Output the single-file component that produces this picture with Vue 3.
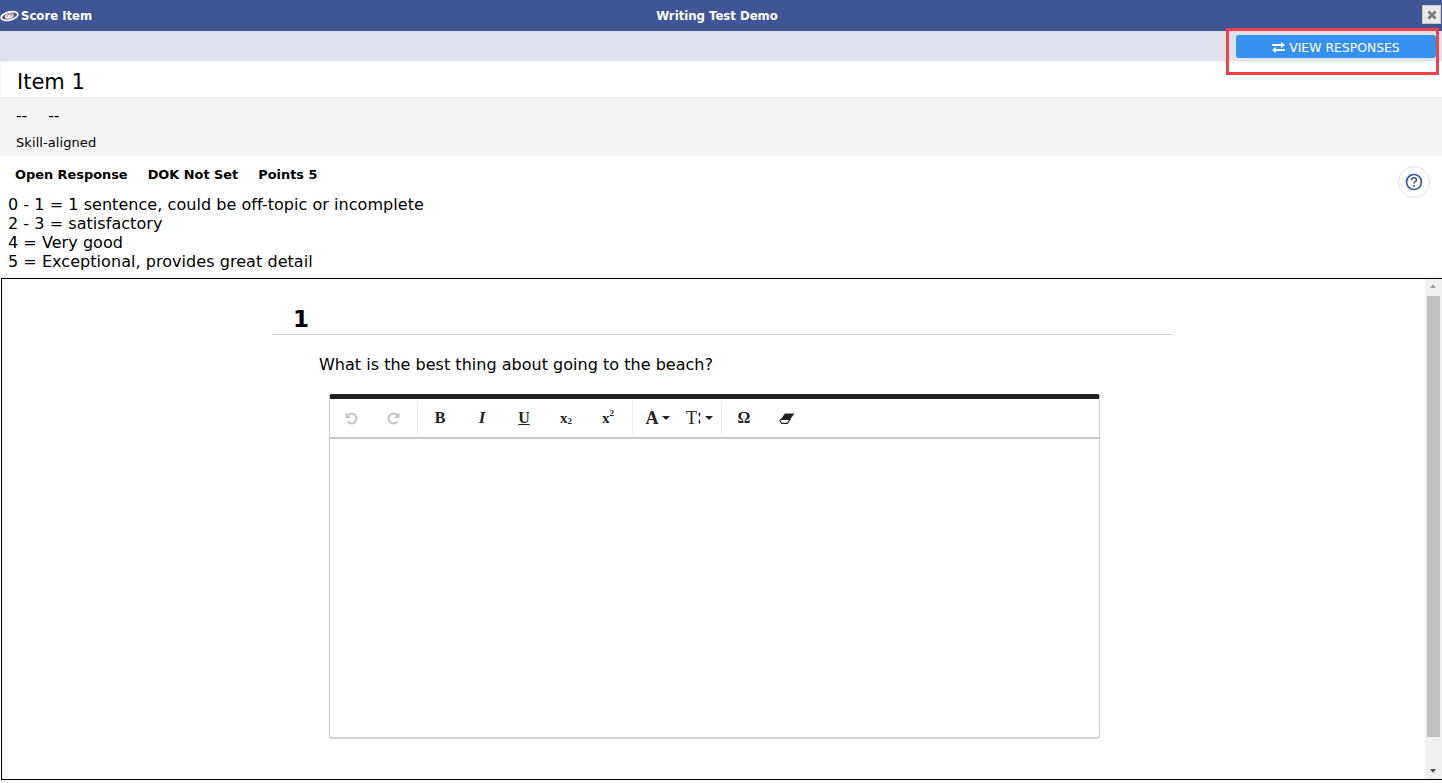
<script setup>
const rubric = [
  '0 - 1 = 1 sentence, could be off-topic or incomplete',
  '2 - 3 = satisfactory',
  '4 = Very good',
  '5 = Exceptional, provides great detail'
]
</script>

<template>
  <div class="page">
    <header class="titlebar">
      <div class="brand">
        <svg class="logo" width="19" height="14" viewBox="0 0 20 14">
          <ellipse cx="10" cy="7" rx="9" ry="4.2" fill="none" stroke="#fff" stroke-width="1.8" transform="rotate(-14 10 7)" />
          <ellipse cx="10" cy="7" rx="5" ry="2.6" fill="#fff" transform="rotate(-14 10 7)" />
          <path d="M7 8.5l1.4-3h1.2M10 5.3h3M11.5 5.3v3M14 5v3" fill="none" stroke="#b8364a" stroke-width=".8" />
        </svg>
        <span>Score Item</span>
      </div>
      <div class="title">Writing Test Demo</div>
      <button class="close" aria-label="Close">
        <svg width="10" height="10" viewBox="0 0 10 10"><path d="M1.5 1.5l7 7M8.5 1.5l-7 7" stroke="#777" stroke-width="2.6" /></svg>
      </button>
    </header>

    <div class="actionbar">
      <button class="view-btn">
        <svg width="13" height="11" viewBox="0 0 13 11" fill="#fff">
          <path d="M0 2h9V0l4 3-4 3V4H0zM13 7H4V5L0 8l4 3V9h9z" />
        </svg>
        <span>VIEW RESPONSES</span>
      </button>
    </div>

    <h1 class="item-title">Item 1</h1>

    <section class="meta-band">
      <div class="dashes"><span>--</span><span>--</span></div>
      <div class="skill">Skill-aligned</div>
    </section>

    <div class="props">
      <div class="props-row">
        <strong>Open Response</strong>
        <strong>DOK Not Set</strong>
        <strong>Points 5</strong>
      </div>
      <button class="help" aria-label="Help">
        <svg width="18" height="18" viewBox="0 0 18 18" fill="none">
          <circle cx="9" cy="9" r="7.5" stroke="#3b5a9e" stroke-width="1.7" />
          <path d="M6.6 7.1c0-1.5 1.1-2.3 2.4-2.3s2.4.8 2.4 2.1c0 1.8-2.4 1.8-2.4 3.5" stroke="#3b5a9e" stroke-width="1.6" />
          <circle cx="9" cy="13" r="1" fill="#3b5a9e" />
        </svg>
      </button>
    </div>

    <div class="rubric">
      <div v-for="line in rubric" :key="line">{{ line }}</div>
    </div>

    <div class="frame">
      <div class="frame-content">
        <div class="question">
          <div class="q-number">1</div>
          <p class="q-text">What is the best thing about going to the beach?</p>
          <div class="editor">
            <div class="toolbar">
              <div class="group">
                <button class="tool muted">
                  <svg width="15" height="15" viewBox="0 0 15 15" fill="none">
                    <path d="M1.5 1.5v5.5H7z" fill="#c4c4c4" />
                    <path d="M3.5 4.5A5 5 0 1 1 3.5 10.5" stroke="#c4c4c4" stroke-width="2" />
                  </svg>
                </button>
                <button class="tool muted">
                  <svg width="15" height="15" viewBox="0 0 15 15" fill="none">
                    <path d="M13.5 1.5v5.5H8z" fill="#c4c4c4" />
                    <path d="M11.5 4.5A5 5 0 1 0 11.5 10.5" stroke="#c4c4c4" stroke-width="2" />
                  </svg>
                </button>
              </div>
              <div class="group">
                <button class="tool glyph bold">B</button>
                <button class="tool glyph italic">I</button>
                <button class="tool glyph under">U</button>
                <button class="tool glyph script">x<sub>2</sub></button>
                <button class="tool glyph script">x<sup>2</sup></button>
              </div>
              <div class="group">
                <button class="tool glyph bold drop">A<i class="caret"></i></button>
                <button class="tool glyph size drop">
                  T<svg class="updown" width="3" height="12" viewBox="0 0 3 12" fill="#333">
                    <path d="M1.5 0L3 2.5H0zM1 2.5h1v2H1zM1 7.5h1v2H1zM1.5 12L0 9.5h3z" />
                  </svg><i class="caret"></i>
                </button>
              </div>
              <div class="group last">
                <button class="tool glyph omega">Ω</button>
                <button class="tool">
                  <svg class="eraser" width="16" height="11" viewBox="0 0 16 11">
                    <path d="M6 .5h9.5L11 6.5H1.6z" fill="#222" />
                    <path d="M1.5 6.5L.8 7.6 2.8 10.4h5.6L11 6.5z" fill="#fff" stroke="#222" stroke-width="1.1" />
                  </svg>
                </button>
              </div>
            </div>
            <div class="editor-body"></div>
          </div>
        </div>
      </div>
      <div class="scrollbar">
        <i class="arrow up"></i>
        <div class="thumb"></div>
        <i class="arrow down"></i>
      </div>
    </div>

    <div class="highlight"></div>
  </div>
</template>

<style>
html, body { margin: 0; background: #fff; }
</style>

<style scoped>
.page {
  position: relative;
  width: 1442px;
  height: 783px;
  overflow: hidden;
  background: #fff;
  color: #000;
  font-family: "DejaVu Sans", Verdana, sans-serif;
  display: flex;
  flex-direction: column;
}
button { font-family: inherit; padding: 0; border: 0; background: none; }

.titlebar {
  height: 31px;
  flex: none;
  background: #405595;
  color: #fff;
  font-size: 11.7px;
  font-weight: 700;
  display: grid;
  grid-template-columns: 1fr auto 1fr;
  align-items: center;
  position: relative;
}
.brand { display: flex; align-items: center; gap: 2px; height: 30px; }
.title { text-align: center; padding-right: 8px; }
.close {
  position: absolute;
  right: 1px;
  top: 5px;
  width: 19px;
  height: 19px;
  background: #e9e9e9;
  border: 1px solid #ccc;
  display: flex;
  align-items: center;
  justify-content: center;
  box-sizing: border-box;
}

.actionbar {
  height: 30px;
  flex: none;
  background: #dfe1ec;
  display: flex;
  justify-content: flex-end;
  align-items: flex-start;
  padding: 4px 6px 0 0;
  box-sizing: border-box;
}
.view-btn {
  width: 200px;
  height: 23px;
  background: #3590f0;
  border-radius: 3px;
  color: #fff;
  font-size: 12.4px;
  display: flex;
  align-items: center;
  justify-content: center;
  gap: 4px;
  padding-top: 1px;
  box-sizing: border-box;
}

.item-title {
  margin: 0;
  height: 36px;
  flex: none;
  font-size: 21px;
  font-weight: 400;
  line-height: 41px;
  padding-left: 16px;
  border-top: 1px solid #f4f4f4;
  border-left: 1px solid #f4f4f4;
  box-sizing: border-box;
  overflow: hidden;
}

.meta-band {
  height: 59px;
  flex: none;
  background: #f4f4f4;
  padding: 9px 0 0 16px;
  box-sizing: border-box;
  font-size: 13px;
}
.dashes { display: flex; gap: 21px; line-height: 20px; font-size: 15.5px; }
.skill { margin-top: 9px; line-height: 16px; letter-spacing: .08px; }

.props {
  height: 37px;
  flex: none;
  position: relative;
  font-size: 12.9px;
}
.props-row {
  display: flex;
  gap: 20px;
  padding: 11px 0 0 15px;
  line-height: 16px;
}
.help {
  position: absolute;
  left: 1398px;
  top: 10px;
  width: 32px;
  height: 32px;
  border: 1px solid #e4e4e4;
  border-radius: 50%;
  background: #fff;
  box-sizing: border-box;
  display: flex;
  align-items: center;
  justify-content: center;
}

.rubric {
  height: 85px;
  flex: none;
  padding: 2px 0 0 8px;
  box-sizing: border-box;
  font-size: 16px;
  line-height: 19px;
  letter-spacing: .05px;
}

.frame {
  height: 502px;
  flex: none;
  margin-left: 1px;
  border: 1px solid #000;
  box-sizing: border-box;
  display: flex;
}
.frame-content { flex: 1; padding-left: 270px; min-width: 0; }
.question { width: 900px; }
.q-number {
  height: 56px;
  box-sizing: border-box;
  border-bottom: 1px solid #ccc;
  padding-left: 21px;
  font-size: 23px;
  font-weight: 700;
  line-height: 81px;
  overflow: hidden;
}
.q-text {
  margin: 20px 0 0 47px;
  font-size: 16px;
  line-height: 19px;
  letter-spacing: .02px;
}
.editor {
  margin: 20px 0 0 57px;
  width: 771px;
  height: 344px;
  box-sizing: border-box;
  border-top: 5px solid #222;
  border-left: 1px solid #ccc;
  border-right: 1px solid #ccc;
  border-bottom: 1px solid #ccc;
  border-radius: 3px;
  box-shadow: 0 1px 1px rgba(0, 0, 0, .15);
  background: #fff;
  display: flex;
  flex-direction: column;
}
.toolbar {
  height: 40px;
  flex: none;
  box-sizing: border-box;
  border-bottom: 2px solid #c8c8c8;
  display: flex;
  padding-top: 2px;
  margin-left: -1px;
}
.group {
  height: 34px;
  display: flex;
  border-right: 1px solid #ebebeb;
  padding: 0 3px 0 1px;
}
.group.last { border-right: 0; }
.tool {
  width: 42px;
  height: 34px;
  flex: none;
  display: flex;
  align-items: center;
  justify-content: center;
  color: #222;
}
.glyph { font-family: "Liberation Serif", "Times New Roman", serif; font-size: 16px; }
.bold { font-weight: 700; }
.italic { font-style: italic; font-weight: 700; font-size: 17px; }
.under { text-decoration: underline; font-weight: 700; }
.script { font-weight: 700; font-size: 15px; }
.script sub, .script sup { font-size: 9px; line-height: 0; position: relative; }
.script sub { vertical-align: baseline; top: 3px; }
.script sup { vertical-align: baseline; top: -5px; }
.drop { gap: 3px; padding-left: 5px; box-sizing: border-box; }
.bold.drop { font-size: 18px; }
.size { font-size: 18px; gap: 0; }
.updown { margin: 0 4px 0 1px; }
.omega { font-weight: 700; font-size: 16px; }
.eraser { margin-left: 2px; }
.caret {
  width: 0;
  height: 0;
  border-left: 4px solid transparent;
  border-right: 4px solid transparent;
  border-top: 4px solid #222;
}
.editor-body { flex: 1; }

.scrollbar {
  width: 17px;
  flex: none;
  margin-right: -1px;
  background: #f0f0f0;
  position: relative;
}
.thumb {
  position: absolute;
  top: 17px;
  left: 2px;
  width: 13px;
  height: 441px;
  background: #c0c0c0;
}
.arrow { position: absolute; left: 5px; width: 0; height: 0; border-left: 3.5px solid transparent; border-right: 3.5px solid transparent; }
.arrow.up { top: 5px; border-bottom: 4px solid #a3a3a3; }
.arrow.down { bottom: 6px; border-top: 4px solid #505050; }

.highlight {
  position: absolute;
  left: 1226px;
  top: 28px;
  width: 213px;
  height: 47px;
  box-sizing: border-box;
  border: 3px solid #f04146;
  pointer-events: none;
}
</style>
